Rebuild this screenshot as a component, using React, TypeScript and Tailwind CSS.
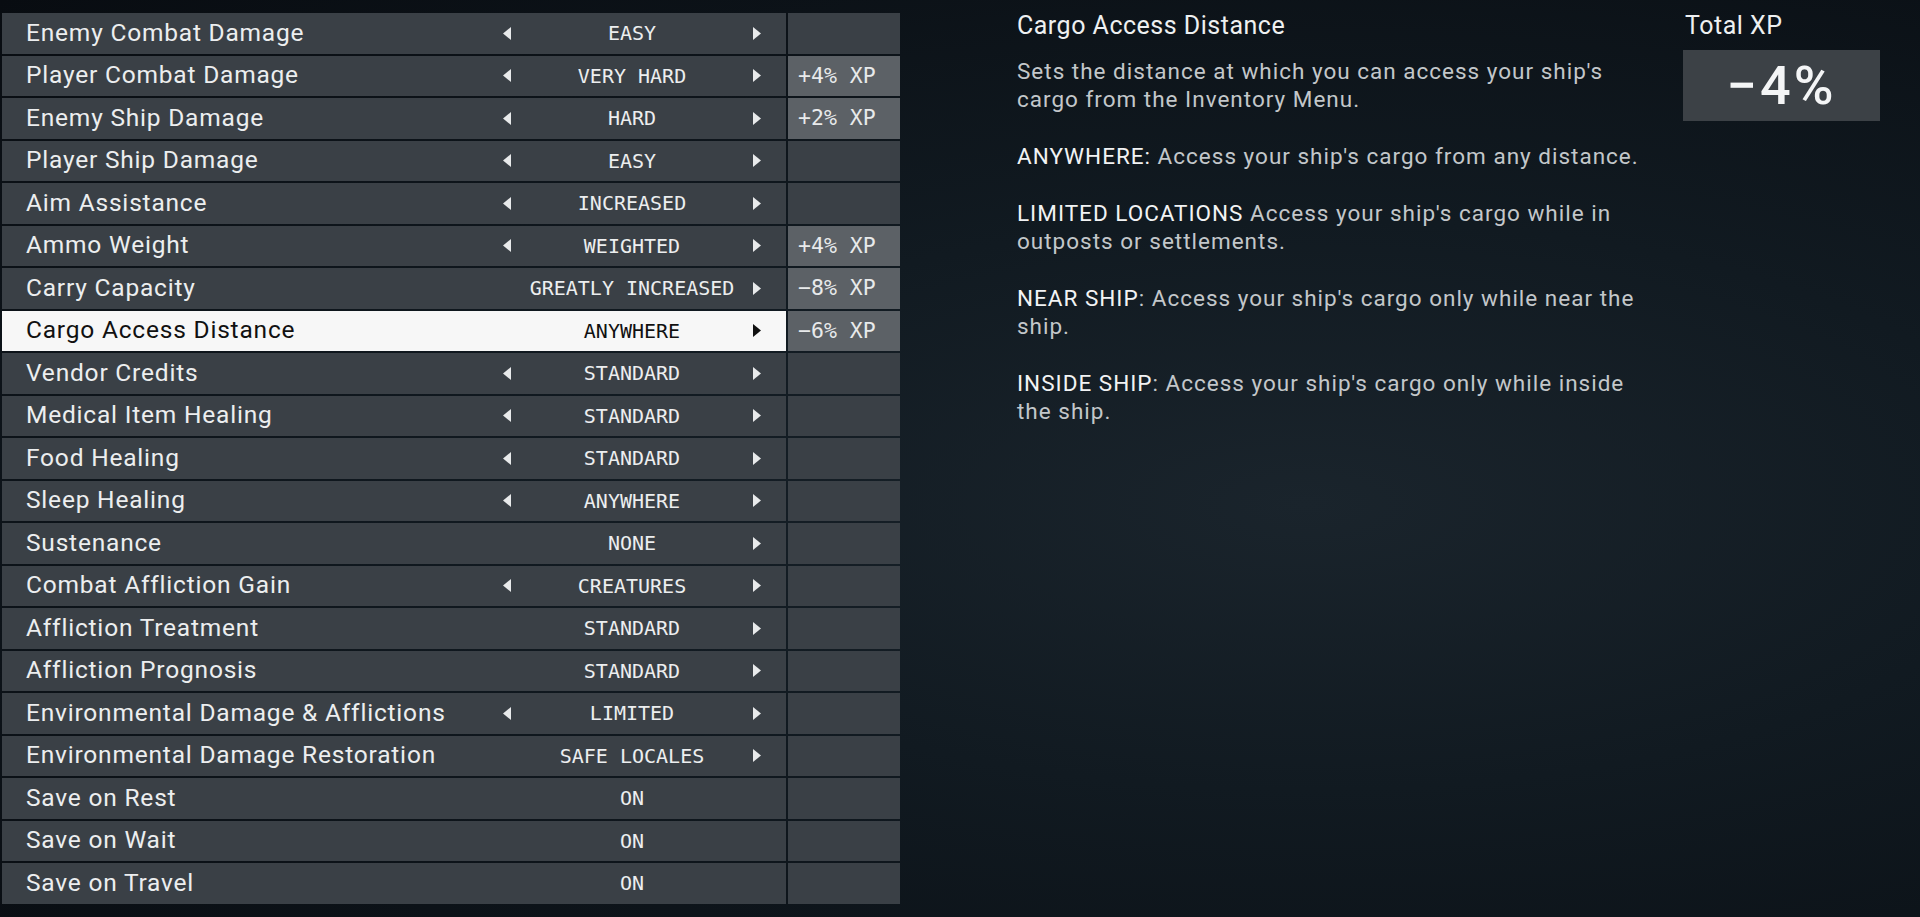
import React from "react";

type Row = {
  label: string;
  value: string;
  left: boolean;
  right: boolean;
  xp?: string;
  selected?: boolean;
};

const rows: Row[] = [
  { label: "Enemy Combat Damage", value: "EASY", left: true, right: true },
  { label: "Player Combat Damage", value: "VERY HARD", left: true, right: true, xp: "+4% XP" },
  { label: "Enemy Ship Damage", value: "HARD", left: true, right: true, xp: "+2% XP" },
  { label: "Player Ship Damage", value: "EASY", left: true, right: true },
  { label: "Aim Assistance", value: "INCREASED", left: true, right: true },
  { label: "Ammo Weight", value: "WEIGHTED", left: true, right: true, xp: "+4% XP" },
  { label: "Carry Capacity", value: "GREATLY INCREASED", left: false, right: true, xp: "−8% XP" },
  { label: "Cargo Access Distance", value: "ANYWHERE", left: false, right: true, xp: "−6% XP", selected: true },
  { label: "Vendor Credits", value: "STANDARD", left: true, right: true },
  { label: "Medical Item Healing", value: "STANDARD", left: true, right: true },
  { label: "Food Healing", value: "STANDARD", left: true, right: true },
  { label: "Sleep Healing", value: "ANYWHERE", left: true, right: true },
  { label: "Sustenance", value: "NONE", left: false, right: true },
  { label: "Combat Affliction Gain", value: "CREATURES", left: true, right: true },
  { label: "Affliction Treatment", value: "STANDARD", left: false, right: true },
  { label: "Affliction Prognosis", value: "STANDARD", left: false, right: true },
  { label: "Environmental Damage & Afflictions", value: "LIMITED", left: true, right: true },
  { label: "Environmental Damage Restoration", value: "SAFE LOCALES", left: false, right: true },
  { label: "Save on Rest", value: "ON", left: false, right: false },
  { label: "Save on Wait", value: "ON", left: false, right: false },
  { label: "Save on Travel", value: "ON", left: false, right: false },
];

function Arrow({ dir, dark }: { dir: "l" | "r"; dark: boolean }) {
  return (
    <svg width="9" height="13" viewBox="0 0 9 13" className="block">
      {dir === "l" ? (
        <polygon points="9,0 9,13 1,6.5" fill={dark ? "#111" : "#e8eaeb"} />
      ) : (
        <polygon points="0,0 0,13 8,6.5" fill={dark ? "#111" : "#e8eaeb"} />
      )}
    </svg>
  );
}

function SettingRow({ r }: { r: Row }) {
  const sel = !!r.selected;
  return (
    <div className="flex h-[40.5px] gap-[2px]">
      <div
        className={
          "flex w-[784px] items-center " +
          (sel ? "bg-[#f7f7f7] text-[#111]" : "bg-[#3a4046] text-[#eceeef]")
        }
      >
        <div
          className="flex-1 pl-[24px] text-[24.5px] tracking-[0.8px]"
          style={{ fontFamily: "Roboto, 'Noto Sans', sans-serif" }}
        >
          {r.label}
        </div>
        <div className="mr-[24px] flex w-[260px] items-center">
          <div className="w-[10px]">{r.left && <Arrow dir="l" dark={sel} />}</div>
          <div
            className="flex-1 text-center text-[20px] leading-none"
            style={{ fontFamily: "'DejaVu Sans Mono', monospace" }}
          >
            {r.value}
          </div>
          <div className="flex w-[10px] justify-end">{r.right && <Arrow dir="r" dark={sel} />}</div>
        </div>
      </div>
      <div
        className={
          "flex w-[112px] items-center pl-[10px] text-[21.5px] text-[#e8eaeb] " +
          (r.xp ? "bg-[#5c6166]" : "bg-[#3a4046]")
        }
        style={{ fontFamily: "'DejaVu Sans Mono', monospace" }}
      >
        {r.xp ?? ""}
      </div>
    </div>
  );
}

export default function App() {
  const sans = { fontFamily: "Roboto, 'Noto Sans', sans-serif" };
  return (
    <div
      className="relative flex h-[917px] w-[1920px] overflow-hidden bg-[radial-gradient(ellipse_at_68%_55%,#1a242c_0%,#111a21_40%,#080c11_100%)]"
      style={sans}
    >
      <div className="flex flex-col gap-[2px] pl-[2px] pt-[13px]">
        {rows.map((r) => (
          <SettingRow key={r.label} r={r} />
        ))}
      </div>

      <div className="ml-[117px] w-[636px] shrink-0 pt-[12px] text-[22.5px] leading-[28px] tracking-[1px] text-[#c3c7ca]">
        <div className="mb-[17px] text-[25px] tracking-[0.5px] text-[#eef0f1]">Cargo Access Distance</div>
        <p className="mb-[29px]">Sets the distance at which you can access your ship's cargo from the Inventory Menu.</p>
        <p className="mb-[29px]">
          <span className="text-[#f2f3f4]">ANYWHERE:</span> Access your ship's cargo from any distance.
        </p>
        <p className="mb-[29px]">
          <span className="text-[#f2f3f4]">LIMITED LOCATIONS</span> Access your ship's cargo while in outposts or settlements.
        </p>
        <p className="mb-[29px]">
          <span className="text-[#f2f3f4]">NEAR SHIP</span>: Access your ship's cargo only while near the ship.
        </p>
        <p className="mb-[29px]">
          <span className="text-[#f2f3f4]">INSIDE SHIP</span>: Access your ship's cargo only while inside the ship.
        </p>
      </div>

      <div className="ml-[30px] shrink-0 pt-[12px]">
        <div className="pl-[2px] text-[25px] leading-[28px] tracking-[0.5px] text-[#eef0f1]">Total XP</div>
        <div className="mt-[10px] flex h-[71px] w-[197px] items-center justify-center bg-[#3c4146] text-[54px] font-medium tracking-[3px] text-[#f4f5f6]">
          −4%
        </div>
      </div>
    </div>
  );
}
